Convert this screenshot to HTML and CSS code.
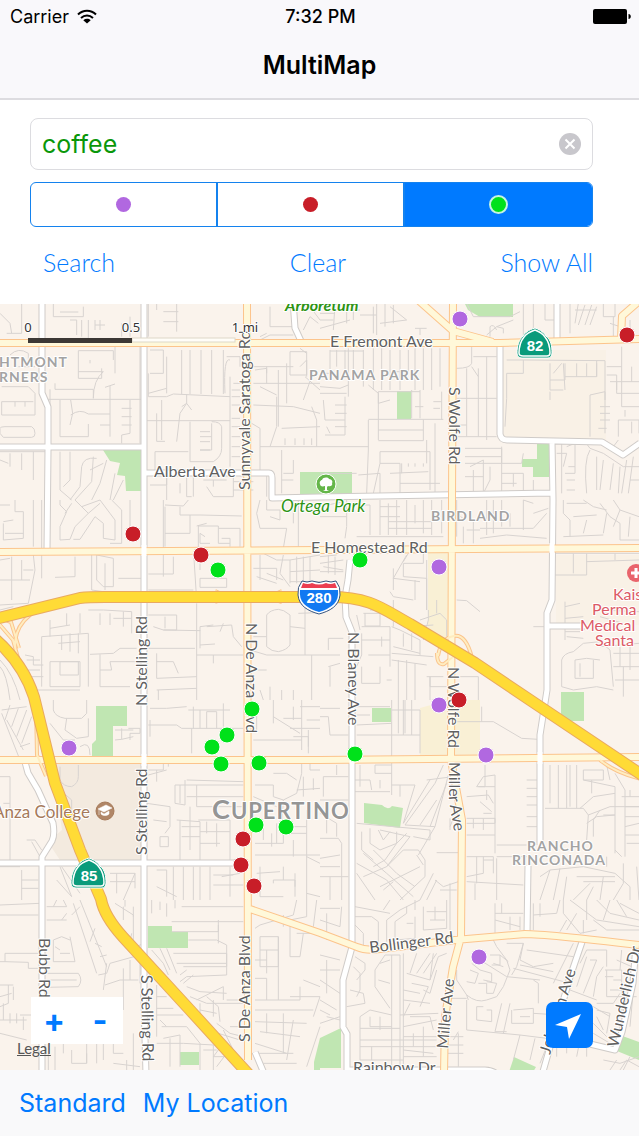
FILE: index.html
```html
<!DOCTYPE html>
<html lang="en">
<head>
    <meta charset="UTF-8">
    <meta name="viewport" content="width=device-width, initial-scale=1.0">
    <title>MultiMap</title>
    <link rel="stylesheet" href="styles.css">
</head>
<body>
    <header class="nav-bar">
        <div class="status-bar">
            <div class="carrier">
                <span>Carrier</span>
                <svg width="20" height="15" viewBox="0 0 20 15" fill="none" stroke="#000" stroke-width="2">
                    <path d="M1 5.500C6 .4 14 .4 19 5.500M4 9C7.500 5.800 12.500 5.800 16 9"/>
                    <path d="M10 14.500L6.300 11.200C8.500 9.300 11.500 9.300 13.700 11.200Z" fill="#000" stroke="none"/>
                </svg>
            </div>
            <time class="clock">7:32 PM</time>
            <svg class="battery" width="38" height="15" viewBox="0 0 38 15">
                <rect width="34" height="15" rx="2" fill="#000"/>
                <path d="M35.500 5C38.500 5 38.500 10 35.500 10Z" fill="#000"/>
            </svg>
        </div>
        <h1>MultiMap</h1>
    </header>

    <form class="search-panel">
        <div class="search-field">
            <input type="text" name="query" value="coffee" aria-label="Search term">
            <button type="reset" class="clear-text" aria-label="Clear text">
                <svg width="22" height="22" viewBox="0 0 22 22">
                    <circle cx="11" cy="11" r="11" fill="#c8c7cc"/>
                    <path d="M6.500 6.500L15.500 15.500M15.500 6.500L6.500 15.500" stroke="#fff" stroke-width="2"/>
                </svg>
            </button>
        </div>
        <div class="segments">
            <label><input type="radio" name="layer" value="purple" aria-label="Purple pins"><span class="dot purple"></span></label>
            <label><input type="radio" name="layer" value="red" aria-label="Red pins"><span class="dot red"></span></label>
            <label><input type="radio" name="layer" value="green" aria-label="Green pins" checked><span class="dot green"></span></label>
        </div>
        <div class="actions">
            <button type="button">Search</button>
            <button type="button">Clear</button>
            <button type="button">Show All</button>
        </div>
    </form>

    <main class="map">
        <svg class="map-canvas" viewBox="0 304 639 766" preserveAspectRatio="xMidYMid slice">
            <defs>
                <g id="state-shield">
                    <path d="M1-15C7-13 10-10 12-7C17-3 18 3 18 10C18 13 16 15 14 15H-12C-15 15-17 13-17 10C-17 3-15-3-11-7C-9-10-6-13 1-15Z" fill="#0a9b7b"/>
                    <path d="M1-13C6-11 9-9 11-6C15-1 16 4 16 10C16 12 15 13 13 13H-11C-14 13-15 12-15 10C-15 4-14-1-10-6C-8-9-5-11 1-13Z" fill="none" stroke="#fff" stroke-width="1.500"/>
                </g>
                <!-- main roads, drawn twice: casing, then fill -->
                <path id="white-roads" d="M42 300V393L48 407V450L47 551M144 300V1000L146 1075M0 447H144M146 473H269Q272 473 272 478V498L320 497L552 493M500 343V434Q501 440 507 440L602 442L623 455L640 443M552 441L553 500L552 600L547 613V690L540 735V845M528 866L527 934M557 300V340M293 300L295 328L301 341M549 626H585M350 560L348 580L345 597L346 617L352 632V947L343 980V1027L347 1034V1075M25 762L28 773L38 790L53 823Q55 835 52 841L42 857V1075M0 863H247M582 942L570 977L542 1075M590 1044L615 1050L622 1032L633 983L636 945M347 1070H485Q495 1070 500 1078M255 1052L266 1078"/>
                <path id="yellow-roads" d="M-5 343L320 343H500L640 339M418 300L453 331L493 342M453 300L452 500L451 760L462 820L461 937L453 967L445 1017L444 1075M247 300L248 1060M-5 552L320 550L645 548M-5 760H320L645 757M250 909L320 933L357 947Q366 951 380 949L455 940L525 934Q545 934 639 945M637 303L622 316L621 339"/>
                <path id="ramps" d="M215 602Q247 590 282 602M215 591Q247 608 282 591M38 609Q21 620 17 633Q11 652 24 668M0 618L11 622L19 648M0 625L13 640L18 658M438 656Q441 638 454 636Q466 634 472 658M437 653Q437 666 444 664L458 653M36 705L37 755L46 776M600 760Q615 773 645 780"/>
                <path id="highways" d="M-5 619L80 598Q88 597 105 597H330C372 597 384 610 410 624L475 663L530 700L645 777M-6 638C16 657 28 678 34 697L55 783L80 850L101 899Q104 916 123 937L190 1010L252 1078"/>
            </defs>

            <rect y="304" width="639" height="766" fill="#faf3ec"/>
            <path d="M48 764H142V860H60L48 842L62 830L54 775Z" fill="#f3eadf"/>
            <path d="M500 350H606V440H503ZM556 555H639V625H556Z" fill="#f9f1e6"/>
            <path d="M428 553H449V640H428ZM420 708L449 700H480V758H420Z" fill="#f9f0d5"/>

            <g class="parks">
                <path d="M103 450H141V491H126L125 476L117 475L120 463L110 461ZM300 472H352V495H300ZM465 304H513V317H480L468 310ZM397 391H411V419H397ZM537 443H549V477H533V467H522V459H537ZM96 706H127V726H113V756H92V744L96 740ZM372 708H391V722H372ZM561 692H584V721H561ZM364 803L382 805Q388 811 392 806L403 808L400 828L364 823ZM148 926H172V932H188V948H148ZM180 1052H199V1065H180ZM320 1038L341 1028V1068H320ZM514 1057L536 1067L533 1072H509ZM617 1034L639 1042V1060L617 1051ZM314 1062L320 1038V1070H314Z"/>
            </g>

            <!-- local streets, one group per tile -->
            <g class="streets">
                <g transform="translate(0 300) scale(.33333)">
                    <path d="M0 40L30 70L35 100M65 10V100H20M160 10V50H250V20M180 36H235M210 60H230V105M245 60V110M265 60V115H240M285 60V90M300 60V90M285 75H315M365 70V110M390 50V110M365 90H410M445 10V110M470 10V30M530 10V95M490 35H535M490 65H535M30 165Q55 140 85 160V190M55 200H105M235 152H340V180M235 152V235H305V205M235 215H310M270 180V190M345 140V220M315 262L345 252M280 295Q280 240 310 215M165 250V268H280V295M140 298H425M5 260H85L105 280V345H5V305H100M45 305V320M75 305V320M0 400V385Q0 380 15 380H95Q105 385 105 400Q105 412 95 412H10L0 400M180 300V410H265V372M212 300L218 340L210 375M212 345Q240 325 265 342H330M330 258V410M300 375H330M390 300V400L365 405V430M365 325H395M365 350H395M365 375H395M150 268V430M420 140V430"/>
                    <path d="M450 150H490V220H450M445 220V290H500L520 282M445 280L500 265M500 170V280M545 150V282M570 150V282M603 150V282M635 150V282M670 150V282M680 170H720V200M690 180Q670 170 675 280M485 300V420M470 340V424H495M520 282L690 290M560 282V310L540 340L530 425M545 320L560 310L575 330M440 362H690M570 365V485H640Q665 470 665 445V380Q660 365 635 365M600 395H630M600 410H635M600 425H630M600 450H630M635 370V450H600M465 520V455H565M690 230V500M700 250H720M695 270H720M695 290H720M695 315H720M695 355H720M695 380H720M695 410H720M695 440H720M695 470H720M760 200H880M765 210L800 205V220M810 20V80H880M870 10L880 60M760 250H960M780 260L830 285M800 200V250M835 210V380M860 190V310M870 155H920V225H870V155M900 200L920 180V230M900 145L920 160M760 315L880 320L960 340M755 370L780 385V440M830 290V380L810 440M845 385L960 380M780 440H960M855 415V435M885 415V435M912 415V435M935 415V435M780 440V515M845 450V580M880 480V520H850M845 540H880M935 320L950 360V440M935 230L910 300M915 230L960 270M910 90L930 50L955 70M930 20L960 60M780 120L810 105H880M780 110L800 100"/>
                    <path d="M0 455H135M30 460V500M65 460V510M100 455V540M0 480L25 490M180 455V570L215 600M210 455V540L190 560M245 500L240 560L210 600M245 500Q250 470 290 475M280 470L275 545L225 600M320 480L300 550L275 600M345 520L330 600M370 540L340 600M270 510L310 490M465 520H500V555H450M500 520V600M540 550V580M580 530V590M560 530V590H575M610 540H680M620 560L640 590H700M640 540V560M700 510V590M700 545H760M700 570H760M800 520V590"/>
                </g>
                <g transform="translate(320 300) scale(.33333)">
                    <path d="M0 40H45M0 60H40M0 85L90 60M45 15L40 90M80 10V70M100 10V60M75 30H120M120 45H170M160 20V100M170 10V105M195 10V80M220 15V70M300 85V105M285 85H320M180 70L260 60M210 20L260 60M410 10H440L460 50H570L600 35M510 110V80Q520 70 530 90M500 105L530 80L550 85V100M530 80L580 60M610 10V110M640 10V110M675 10V60H720M750 10V100M775 10L765 70M795 15L775 75M815 15L795 75M830 20L810 75M765 30H830M850 10V50H885V10M880 50V110M930 60V100M870 70L900 80"/>
                    <path d="M30 150V220H0M50 150V200M75 150V230M100 150V225M130 150V260M160 145V270M185 145V270M210 150V270M240 150V270M265 150V215H220M285 145V270M310 145V270M335 145V270M360 145V260M30 153H130M0 260L60 265L85 255M85 145V290M0 280H80M10 300L15 360H75M20 380L30 400M75 290V405H15M45 315H80M45 340H80M45 380H80M145 255L175 280V420M175 275L300 275M175 275V310L210 300M275 270V355M300 270V355M285 320H310M340 305H365M340 325H360M365 275V360M145 358H370M175 390H310V358M175 422H310V390M145 360V450L140 580M0 440H145M180 455H330V570M180 455V490H240V580M210 520L325 515M245 490V520M265 490V500M285 490V500M310 490V500M180 490L160 580M115 525L180 520V580M345 370V580M320 420V490M240 550H360M0 520H110"/>
                    <path d="M410 205Q450 205 455 190V140M460 170L530 170M440 205V410M475 205V410M500 170V420M455 200L475 230M410 295L530 295M410 375H440M410 410H530M435 445H545V490H435M435 470H545M450 500L490 480V580M435 530H490M460 510V580M510 500V540L490 580M545 440V580M545 520H610V580M545 490H605L610 460M610 180V220H560V295L555 380M560 180H610L855 182V300M690 190V270H730M690 240H735V190M730 190L735 270M770 190V230M800 190V230M830 190V230M735 230H830V182M690 275V300M725 190L700 220M810 285L855 275V400M810 285V410M840 320H870M840 340H870M840 360H870M835 385H860M905 140V320H957M860 200H905M860 225H890V280H905M870 245H957M890 245V270M905 280H957M935 200V245M895 360H957V400M895 360V410M915 330V350M935 365V400"/>
                    <path d="M725 430V580M710 460H740L730 500M740 440L765 430V520M765 500H745M765 520H735M765 540H740M740 570H765M795 425L810 445L850 460L910 500L957 500M810 450Q790 480 800 580M830 470V570M850 480L840 570M880 490L870 570M900 500L895 580M920 480L905 580M940 470L925 580M930 540H957M860 425L880 440L895 420M640 540V580M580 520V560M545 550H590"/>
                </g>
                <g transform="translate(0 500) scale(.33333)">
                    <path d="M0 15H30M45 0V35L70 35V115L10 120V70M15 100L70 100M10 65L40 60M125 0V145M100 0V140M180 0V15L200 35L180 80V120L210 118L225 80L265 40L225 0M245 20L300 0M215 10L195 40M265 40L300 10M300 0L330 40L345 60V120L310 115V70L285 50L240 118H220M335 0L365 30V130H330M390 0V110M490 0V230M495 20V140M495 15L550 18L565 0M540 20V45H600L725 48M570 45V100H495M600 100V130L630 130M595 145V78H655V130L690 130M655 85H720V140M590 78L620 70M600 100L615 110M580 145L590 300M665 115H690V140M600 190V210M600 235H680V262H600V235M445 222H520V170M445 270H580M355 235H425M165 232L225 230V170M125 165V235M100 165L105 210L85 310L0 315M0 240H90M0 180L30 175M35 170V300M70 210H100M65 180V240M275 165V270L310 275M290 165V240L310 260M290 165L340 175V260H310M315 190V270M780 0L770 40L780 85H860L850 145M800 0V30H840V60L810 50M880 0V70M895 0V140M780 165V240M760 205H830V240M790 160L830 180H870V250M850 165L840 220L870 260M870 180L960 165M870 215L960 210M870 245L960 245M890 170V250M910 170V260M930 170V260M800 220L850 240M770 230L830 250"/>
                    <path d="M125 560V410L265 400V560M150 360V410M150 385L210 375M200 340V375M240 340V400M185 405V450M210 400V455M235 400V460M175 430L240 425M265 330H310L395 335V400M300 340V375M330 340V375M370 335V380M340 355H395M270 463L340 460L360 445H410M300 463V560H390M330 485H410M330 485L335 510H300M150 485H240V560H150V485M180 485V525H235V485H180M75 465L100 470V495M80 480H120M85 510H120M95 530H130M100 495H130M110 570H240M445 345H530V390H490L460 380M495 350V385M445 445L585 445M470 460V535L590 530M470 485H520L535 520M470 570L590 565M475 600V570M490 390L600 392V380L640 375M620 380L695 375M600 390V445M590 310V600M590 465L730 465M640 465V490M695 375L700 410L725 440M600 435L645 432M660 395L670 370M760 410H800M800 345V440Q815 455 835 455Q860 450 870 435V345Q850 328 835 328Q810 330 800 345M750 450L800 465H960M915 310V465M895 340L950 338M870 380L915 385M935 465V600M780 570L790 600M810 560V600M845 570V600M880 570V600M750 510H800"/>
                    <path d="M0 480Q40 520 60 600M0 500Q20 520 30 600M0 330L40 320M0 340L30 332"/>
                </g>
                <g transform="translate(320 500) scale(.33333)">
                    <path d="M0 20L70 5M80 0V80L75 115M0 50H80M150 15V105M180 0V105M205 10V105M230 0V105M260 0V105M285 15V70M310 0V100M335 0V105M365 0V100M105 15H150M180 20H240M180 50H240M205 65H335M205 85H335M110 110H370M410 0V110M430 80V130M460 60V130M440 90H480M500 0V105M520 0V100M545 0V80M570 40V80M480 85H640L680 40M410 40L435 60M640 10L610 0V90M480 115L560 105L680 115M640 40L685 25M730 0V40L750 60V110M740 10H800M760 50L830 45M790 0L820 20L860 30M730 110L850 105M840 10L870 50L900 70V120H957M880 0L900 30L957 50M900 30L880 80M930 50L925 110M800 60L790 100M860 40L850 100"/>
                    <path d="M0 170L50 165M0 190L70 180M0 215H70M25 165V220M45 170V225M10 200L70 210M220 235L260 165M220 205V270M250 230L320 235V330M220 235L300 245M265 160L250 185M250 230V190H310V150M320 180V330M210 275L220 290L280 300M135 290L200 320L270 380L340 375M130 340H180V378H135V340M150 330H180M110 345L120 390M220 300V380M285 240V300M325 330V360L310 420M300 360L360 340L380 360V410M350 300V340M410 300L440 302L480 335M640 380H685M705 225H800V160M800 185L957 180M885 160V180M705 160H957M760 160V220M735 305V420M735 320L780 310M735 355L790 350M735 395H780M740 410L790 415M840 330L957 335M840 350L910 370"/>
                    <path d="M125 400V465L110 500M125 380H210V500M125 420H210M145 465H210M185 410V440M215 380L240 390L300 420V465M250 400V440M275 400V450M220 440L300 460M25 450V415H70M0 465H60M25 500L60 490M125 500V550H180V500M30 500V560M215 460L340 470M215 480L320 495M235 480V600M260 480V600M285 490V600M200 540H215M330 530V560H380M320 530H370M330 530V600M420 530H475V600M725 480Q730 460 760 455L790 430L840 425M725 480V560L760 570M765 480V535H820V480M765 480L800 475L840 480M780 490V530M840 425L870 450L880 560M840 440L957 430M880 460H957M900 440V500M930 440V510M880 500H957M885 540H957M910 500V590M760 570L830 560L880 570"/>
                </g>
                <g transform="translate(0 700) scale(.33333)">
                    <path d="M5 40L60 180M5 30L80 20M30 15L15 60M55 25L35 80M80 30L50 110M95 50L65 130M20 60L70 150M60 140L90 130M160 0V30Q165 50 195 55H245L260 40V0M200 55L195 90L230 115L265 110V55M150 70L190 120H225M240 140Q270 120 270 165M345 90H400M345 120L365 118V85M365 118L400 110M385 85H420V100L390 100V120M450 25H500L560 20M450 60V110M445 75H530L545 85H730M575 85V160M580 20V85M600 30V85M620 35H650V85M620 35V85M565 30H690M670 10V80M445 225L500 210M470 210V245M445 210H490V180M505 170V200M525 255V310L555 315V240M540 255V310M525 255H730M590 255V320H730M560 290H730M560 240L730 245M820 0V70M905 0V150M880 20V60M850 55H905M870 85H960M900 20H960M920 60H960M925 90V160M880 110H925V140M770 45V90M760 120H905M820 50L900 100M765 255H820V290L850 300L890 280L905 220V190M820 220H860L890 240M930 190V210H960M850 300L845 370M890 270L960 265M910 230V290M940 235V270M760 290L830 320"/>
                    <path d="M0 230H30V480M30 310H10M80 420H105L125 450M95 425L120 470M180 200V240Q190 260 215 260Q235 250 235 230V195M180 270L215 300V340M180 500L215 590M185 500L240 580M170 540L215 590M0 500H60M65 510V600M65 540H115M65 565H115M330 520H405V565M330 545H405M350 520V580M405 520L370 600M440 310L510 320V380L495 400M460 360L500 365M480 410V440H505V410H480M530 360L600 365V480M570 320V450M545 380H600M545 410H600M595 360H690M600 395H690M600 430H660M620 365V400M650 370V440M690 360V480M540 360V480M520 500V600M550 500V600M580 500V600M600 500V600M630 500V600M665 530L720 520M470 510H500V590M470 560L530 590M690 500V590M640 555H730M640 525H700M765 465H960M790 370V420M815 400V440M830 370V430M850 380V430M765 430H850M880 420V470M820 540H885V590M820 540V550M850 500V540M780 500V590H850M770 520L840 515M885 520V560M920 330V600M920 470L960 490M920 580L960 590M880 380H920M870 400H920"/>
                </g>
                <g transform="translate(320 700) scale(.33333)">
                    <path d="M0 50H25L30 105H85M0 25H60M110 105H300M215 0V285M250 0V105M275 0V105M110 75L215 70M110 45H150M110 20H210M215 30H300M235 0V100M255 0V100M300 30V160M0 300H85M10 230H85M10 230V290M50 195V225M105 275H210M105 240H150L155 270M120 195V260M165 195V220H215M165 195H215M180 265V240M215 255H285L250 370M240 255V290M370 195L345 250L255 375L345 380M320 240L400 230M330 240L250 370M385 225L345 380L295 465M380 250L330 380M350 300L300 375M410 65H520L605 115L655 118M485 20V65M470 260L490 230L525 225V460M495 195V260H470M440 290L505 285L520 310M480 305L515 335M490 340H515M440 355H525V370H440M460 355V385M490 355V390M440 405H525M475 260H525M500 270V300M530 435H620M350 458H430M390 355V390M400 355L390 380"/>
                    <path d="M620 240H655M620 265H655M620 290H655M620 315H655M620 350H655M620 380H655M690 195V310M715 195V325M740 195V325M770 195V325M750 195V320M675 325H790L805 345L870 320H957M790 210H850V240H790V210M815 240V280M790 240L885 260V460M860 195L870 240M780 325L820 290L885 280M805 345L800 420M840 330L820 360V410M850 345H885M885 220L915 270V470M800 370L830 350L885 345M905 290H957M915 320H957M915 350H957M915 380L957 370M915 405H957M930 270V290M885 450L905 470M920 430H957"/>
                    <path d="M0 415H55L65 430V600M0 340L50 370V410M20 360V400M0 475L60 465M0 500H60M0 530H85M30 530V600M110 370L330 390V420L280 410M150 385V430L180 450L230 430V395M175 390L190 420L210 395M125 395V450L160 480M180 390L270 410L200 500M160 450L230 520L285 560M130 460L200 520L280 590M110 490L200 540L250 600M110 520L165 600M160 500L195 480L230 430L260 400M130 530L200 500L250 450H295L315 480V530L240 600M180 560L300 500M190 570L220 545M290 465L310 495M345 540L370 560L415 545M340 520L300 600M350 540L320 600M390 550V600M410 570H360M440 470H520V520M470 470V550M490 480H520M440 530L490 520V470M440 545L610 555M465 550V600M530 470H620M530 475V600M660 530L690 510L790 500L885 520M690 510L660 600M720 505L700 600M740 530L730 600M770 530H885M790 545H885M820 560L800 600M850 530L840 600M860 470V500M885 520L930 560V600M910 490V550L880 600M950 500L957 600M760 600L810 550"/>
                </g>
                <g transform="translate(0 900) scale(.33333)">
                    <path d="M0 45H115M0 15L120 10M15 160V185H0M15 160H115M15 185L85 187V205L115 205M140 20H200L190 0M140 60H200M200 40L185 60M170 0L160 20M220 10L290 220M240 0L320 200M215 45L240 20M285 85L270 125M285 130L305 140M300 170L320 165M160 120L185 110L210 120M160 120V185H225L210 110M180 160H210M165 140L180 150M140 220H235Q250 240 235 260L140 262M140 240H230M295 225L320 220L330 190L420 165M320 190L310 270M315 255L360 240H415M370 205V330M390 180V240M420 190V250M395 100L385 150M430 130L400 145M345 10L400 45V120M370 20V60M400 20V50M375 0V20M0 255H40M25 255V310L0 320M40 260V300M0 290L35 280M10 310V360M30 340V370M70 350V390M50 340V370M0 400L80 420M60 345H95M0 360H80M145 300V510M165 440V510M190 430V460M215 450V490H260V460M260 430V490M290 430V490M310 430V480M340 430V460H370M340 490L420 500M380 480V510M400 400V510"/>
                    <path d="M455 0V40M480 5V30M500 10V50M525 0V25M545 20H730M515 65H730M515 95H655V75M565 120H650L680 135M655 60V130M455 150L490 190L505 225M480 145L510 210M500 145L530 220M520 160H680M530 190H680M550 200H680V160M540 225L560 210M680 135V225L560 230L540 245M550 250L580 225M560 260L600 275L680 280M590 300L670 260V300M570 290L620 310H730M600 310V360M620 290L655 320L660 365M640 300V350M600 330L650 340M680 300L730 300M650 370L690 400L730 410M670 390L700 450M655 400L720 420M690 380H725M470 255V410M470 290H500M470 325H520M470 345H550M480 360L500 380M490 415L540 405V500M510 415V500M470 430H550M485 380H560L600 430M550 430L640 435V510M600 430V510M610 450H650M640 470H690M650 500L680 460M670 430L640 470M765 85L780 75L880 45L890 0M780 110V150H835V110H780M780 150V200H835V150M800 150V220M765 180H800M765 300H900L900 260M835 110V300M765 235H800V300M850 45V80M870 70V170H900L910 100M890 100H960M910 240L960 260M870 290H960L940 350M765 330H940M765 365L920 370M780 395L900 410M800 340V400M850 340V460M880 360L860 480M765 430L860 460M770 460H880M790 490H890M920 500L960 380M920 0V50L870 60M950 0L940 80"/>
                </g>
                <g transform="translate(320 900) scale(.33333)">
                    <path d="M0 60L60 80L65 20M0 25H60M20 40V120M0 165L60 180M0 210H60M0 240L60 280M20 180V280M0 300L50 330M0 330L30 345M20 350L60 360M0 370L60 350M105 50H155L175 65V130M105 75L130 100V140L200 135M105 20L210 40M190 30L210 0M200 60L240 30L300 0M200 60V125M225 65V120L285 115V50M225 65L260 40V20M285 0V30M260 70H280M310 20V90L380 85V0M320 35H380M330 60H375M390 0V90M345 20V60M105 170L135 190V210L110 240M100 200L120 220V270L110 290M90 270L130 280L135 310L80 320M165 210L195 165M165 210V260L210 325M175 240L210 250M180 190L210 180M195 165H240V600M215 165V530M250 160V530M270 220L290 160M290 220L330 160M310 220L350 160M260 220L330 240L340 160M275 250L325 260L300 320M250 300L330 310M250 270L300 280M330 240L355 170L380 160M310 270L330 280L350 210M120 350L150 330L215 345M120 350V480M150 350V380H215M120 385H240M120 420H350M120 440H350M120 480H250M155 440V480M180 350V390M270 350H330L340 390M250 380L350 360M270 310L250 350M250 410H350M250 450L340 460M250 470H350M240 345L355 340M280 400V440M310 380V470"/>
                    <path d="M410 210V240L440 285Q470 310 500 300L530 290L550 260L570 210L560 180L530 140L520 120M440 285L445 300M450 210L475 220L465 250L440 245M455 190L480 210L515 220V245L490 240M475 250L500 250V280H520L530 250L500 245M480 180L560 230L660 240M510 165H540V195H515M540 165L565 185M520 190L550 200M525 10V100M525 40H610M525 60L600 80M545 10V40M570 50V90M600 50V90M640 10V90M640 45L710 40L720 0M660 10V50M560 130H610L590 200L575 225M610 130L600 180L640 200L700 190M620 150L760 170M580 205L750 250M600 195L700 215M640 240L655 250V310M545 310L525 395H560M570 310L550 400M580 330L640 325V370H575V330M600 350H630M640 340L720 345M470 320V360L515 365V330H500M470 320H490M440 300V390L600 405L720 420M390 295H440M415 400V500M415 395L400 420M380 410H430M380 435H430M380 460H430M600 405L580 480M645 415L630 480M690 415L660 490M780 420L770 470M710 440V470M740 440V460M800 440V470"/>
                    <path d="M730 0V40L780 100L830 90M750 0L830 60L957 80M800 0V60M830 0L870 40L957 60M870 0L850 60M890 0L920 50M900 10L957 40M740 60L720 95M770 40L740 90M790 60V100M820 60L860 90L957 90M760 130L700 250M780 190L800 150L860 150V200M770 260L800 170M790 280L830 180L810 180M820 290L830 230L850 200M855 210H905V290H860V210M855 230H880M870 270H905M880 240H905M890 180L935 200M905 150L900 210M940 180V220M750 270L830 300M820 320L870 350M830 310L880 310L900 280M830 330L870 340L860 400M820 370L860 410M820 400L870 430M830 350L850 390M940 270L930 380M950 290H920M900 330H930M700 440L740 420M850 480L900 490L957 470M870 510L890 480M900 510L920 480L957 500M930 470L910 510"/>
                </g>
            </g>

            <use href="#white-roads" class="white-casing"/>
            <use href="#white-roads" class="white-road"/>
            <use href="#yellow-roads" class="yellow-casing"/>
            <use href="#ramps" class="ramp-casing"/>
            <use href="#yellow-roads" class="yellow-road"/>
            <use href="#ramps" class="ramp"/>
            <path class="white-road" d="M144 545V556M144 754V766M552 543V553M540 752V764M352 755V764"/>
            <use href="#highways" class="highway-casing"/>
            <use href="#highways" class="highway"/>

            <g class="road-names">
                <text x="330" y="347">E Fremont Ave</text>
                <text x="154" y="477">Alberta Ave</text>
                <text x="311" y="553">E Homestead Rd</text>
                <text transform="translate(250 490) rotate(-90)">Sunnyvale Saratoga Rd</text>
                <text transform="translate(449 387) rotate(90)">S Wolfe Rd</text>
                <text transform="translate(147 706) rotate(-90)">N Stelling Rd</text>
                <text transform="translate(147 855) rotate(-90)">S Stelling Rd</text>
                <text transform="translate(246 623) rotate(90)">N De Anza Blvd</text>
                <text transform="translate(348 632) rotate(90)">N Blaney Ave</text>
                <text transform="translate(448 667) rotate(90)">N Wolfe Rd</text>
                <path id="miller-bend" d="M449 762V798Q450 810 457 845" fill="none" stroke="none"/>
                <text><textPath href="#miller-bend">Miller Ave</textPath></text>
                <text transform="translate(39 938) rotate(90)">Bubb Rd</text>
                <text transform="translate(141 975) rotate(89)">S Stelling Rd</text>
                <text transform="translate(250 1042) rotate(-90)">S De Anza Blvd</text>
                <text transform="translate(370 953) rotate(-7)">Bollinger Rd</text>
                <text transform="translate(448 1049) rotate(-85)">Miller Ave</text>
                <text transform="translate(550 1055) rotate(-73)">Johnson Ave</text>
                <text transform="translate(618 1048) rotate(-77)">Wunderlich Dr</text>
                <text x="353" y="1073">Rainbow Dr</text>
            </g>
            <g class="area-names">
                <text x="-1" y="367">HTMONT</text>
                <text x="-1" y="382">RNERS</text>
                <text x="309" y="380">PANAMA PARK</text>
                <text x="431" y="521">BIRDLAND</text>
                <text x="527" y="851">RANCHO</text>
                <text x="512" y="865">RINCONADA</text>
            </g>
            <text class="city-name" x="212" y="819">C<tspan class="small-cap">UPERTINO</tspan></text>
            <g class="park-names">
                <text x="285" y="311" class="heavy">Arboretum</text>
                <text x="281" y="512">Ortega Park</text>
            </g>
            <text class="college-name" x="90" y="818" text-anchor="end">Anza College</text>
            <g class="hospital-name">
                <text x="613" y="600">Kais</text>
                <text x="592" y="615">Perma</text>
                <text x="580" y="631">Medical</text>
                <text x="595" y="646">Santa</text>
            </g>

            <!-- places -->
            <g transform="translate(326 484)">
                <circle r="10" fill="#64b649" stroke="#fff"/>
                <path d="M-1 6L-1 2C-4 3-6 2-6 0C-7-2-5-4-4-4C-3-7 2-7 3-5C6-5 7-2 6-1C7 1 5 3 2 2L1 3V6L3 7H-3Z" fill="#fff"/>
            </g>
            <g transform="translate(105 811)">
                <circle r="9" fill="#b08667" stroke="#a67a59"/>
                <path d="M-7-2L1-6L7-3L-1 1ZM-4 1L-1 3L4 0V3C2 5-2 5-4 3ZM-6-1V4" fill="#fff" stroke="#fff" stroke-width=".5"/>
            </g>
            <g transform="translate(636 573)">
                <circle r="9" fill="#e9646c"/>
                <path d="M-5 0H5M0-5V5" stroke="#fff" stroke-width="3"/>
            </g>
            <g transform="translate(534 343)" class="shield">
                <use href="#state-shield" stroke="#fff" stroke-width="1"/>
                <text x="1" y="8">82</text>
            </g>
            <g transform="translate(88 873)" class="shield">
                <use href="#state-shield" stroke="#fff" stroke-width="1"/>
                <text x="1" y="8">85</text>
            </g>
            <g transform="translate(319 597)" class="shield">
                <path d="M-17-16Q-12-14-7-16Q0-13 7-16Q12-14 17-16Q22-10 21-2C20 9 11 14 0 17C-11 14-20 9-21-2Q-22-10-17-16Z" fill="#fff" stroke="#35547f"/>
                <path d="M-16-14Q-11-12-7-14Q0-11 7-14Q11-12 16-14L18-9H-18Z" fill="#ec3e50"/>
                <path d="M-19-7H19Q20 2 15 7Q10 12 0 15Q-10 12-15 7Q-20 2-19-7Z" fill="#1179f2"/>
                <text y="6">280</text>
            </g>

            <g class="pin purple">
                <circle cx="460" cy="319" r="8"/><circle cx="439" cy="567" r="8"/><circle cx="439" cy="705" r="8"/><circle cx="486" cy="755" r="8"/><circle cx="69" cy="748" r="8"/><circle cx="479" cy="957" r="8"/>
            </g>
            <g class="pin red">
                <circle cx="627" cy="335" r="8"/><circle cx="133" cy="534" r="8"/><circle cx="201" cy="555" r="8"/><circle cx="459" cy="700" r="8"/><circle cx="243" cy="839" r="8"/><circle cx="241" cy="865" r="8"/><circle cx="254" cy="886" r="8"/>
            </g>
            <g class="pin green">
                <circle cx="360" cy="560" r="8"/><circle cx="218" cy="570" r="8"/><circle cx="252" cy="709" r="8"/><circle cx="227" cy="735" r="8"/><circle cx="212" cy="747" r="8"/><circle cx="221" cy="764" r="8"/><circle cx="259" cy="763" r="8"/><circle cx="355" cy="754" r="8"/><circle cx="256" cy="825" r="8"/><circle cx="286" cy="827" r="8"/>
            </g>

            <g class="scale">
                <rect x="132" y="338" width="103" height="4" fill="#fffdf8" stroke="#ddd8c8"/>
                <rect x="28" y="338" width="104" height="5" fill="#3c3835"/>
                <text x="28" y="332" text-anchor="middle">0</text>
                <text x="131" y="332" text-anchor="middle">0.5</text>
                <text x="245" y="332" text-anchor="middle">1 mi</text>
            </g>
        </svg>

        <div class="zoom-buttons">
            <button type="button" aria-label="Zoom in">+</button>
            <button type="button" aria-label="Zoom out">-</button>
        </div>
        <a class="legal" href="#">Legal</a>
        <button type="button" class="locate" aria-label="Locate me">
            <svg width="47" height="46" viewBox="0 0 47 46">
                <path d="M35 12L23 37L21 25L9 23Z" fill="#fff"/>
            </svg>
        </button>
    </main>

    <footer class="toolbar">
        <button type="button">Standard</button>
        <button type="button">My Location</button>
    </footer>
</body>
</html>
```
FILE: styles.css
```css
* {
    box-sizing: border-box;
}
body {
    font-family: Inter, "Liberation Sans", sans-serif;
    background: #fff;
    color: #000;
    margin: 0;
    min-height: 100vh;
    display: flex;
    flex-direction: column;
}
button {
    background: none;
    border: none;
    padding: 0;
    color: #007aff;
    font-family: inherit;
    cursor: pointer;
}
svg {
    display: block;
}

/* top bar */
.nav-bar {
    background: #f9f8fb;
    border-bottom: 2px solid #dddce0;
    height: 100px;
}
.status-bar {
    display: grid;
    grid-template-columns: 1fr auto 1fr;
    align-items: center;
    height: 32px;
    padding: 0 8px 0 10px;
    font-size: 18px;
}
.carrier {
    display: flex;
    align-items: center;
    gap: 8px;
}
.clock {
    font-weight: 500;
}
.battery {
    justify-self: end;
}
h1 {
    margin: 0;
    text-align: center;
    font-size: 25px;
    font-weight: 600;
    line-height: 66px;
}

/* search form */
.search-panel {
    padding: 18px 46px 0 30px;
    height: 204px;
}
.search-field {
    display: flex;
    align-items: center;
    height: 52px;
    border: 1px solid #dcdce0;
    border-radius: 8px;
    padding: 0 11px;
}
.search-field input {
    flex: 1;
    min-width: 0;
    border: none;
    outline: none;
    padding: 0;
    background: none;
    color: #0a970a;
    font-family: inherit;
    font-size: 25px;
}
.segments {
    display: grid;
    grid-template-columns: repeat(3, 1fr);
    height: 45px;
    margin-top: 12px;
    border: 1px solid #1482ee;
    border-radius: 6px;
    overflow: hidden;
}
.segments label {
    display: flex;
    align-items: center;
    justify-content: center;
    border-right: 2px solid #1482ee;
    cursor: pointer;
}
.segments label:last-child {
    border-right: none;
}
.segments label:has(input:checked) {
    background: #007aff;
}
.segments input {
    appearance: none;
    width: 0;
    height: 0;
    margin: 0;
}
.dot {
    width: 15px;
    height: 15px;
    border-radius: 50%;
}
.dot.purple {
    background: #b168e0;
}
.dot.red {
    background: #c81e28;
}
.dot.green {
    width: 19px;
    height: 19px;
    border: 2px solid #c5f3e0;
    background: #00e11a;
}
.actions {
    display: grid;
    grid-template-columns: 1fr auto 1fr;
    padding-left: 13px;
    margin-top: 13px;
}
.actions button {
    font-family: Lato, sans-serif;
    font-size: 25px;
    font-weight: 300;
    line-height: 44px;
}
.actions button:first-child {
    justify-self: start;
}
.actions button:last-child {
    justify-self: end;
}

/* map */
.map {
    position: relative;
    flex: 1;
    min-height: 400px;
    overflow: hidden;
    display: flex;
}
.map-canvas {
    flex: 1;
    width: 100%;
    font-family: Lato, "Open Sans", sans-serif;
}
.parks {
    fill: #c0e6b2;
}
.streets {
    fill: none;
    stroke: #d8d3d0;
    stroke-width: 3;
}
.white-casing, .white-road, .yellow-casing, .yellow-road, .ramp-casing, .ramp, .highway-casing, .highway {
    fill: none;
    stroke-linejoin: round;
}
.white-casing {
    stroke: #cfcbc8;
    stroke-width: 7;
}
.white-road {
    stroke: #fff;
    stroke-width: 5;
}
.yellow-casing {
    stroke: #fcc48c;
    stroke-width: 8;
}
.yellow-road {
    stroke: #fff8d9;
    stroke-width: 6;
}
.ramp-casing {
    stroke: #fbc48c;
    stroke-width: 4;
}
.ramp {
    stroke: #ffedc0;
    stroke-width: 2;
}
.highway-casing {
    stroke: #e9a961;
    stroke-width: 12;
}
.highway {
    stroke: #ffdb36;
    stroke-width: 10;
}
.map-canvas text {
    paint-order: stroke;
    stroke: #fff;
    stroke-width: 2px;
    stroke-linejoin: round;
}
.road-names {
    font-size: 16px;
    fill: #606060;
}
.area-names {
    font-size: 14px;
    font-weight: 700;
    letter-spacing: 1px;
    fill: #a3a3a3;
}
.city-name {
    font-size: 27px;
    font-weight: 700;
    letter-spacing: 1px;
    fill: #959595;
}
.small-cap {
    font-size: 22px;
}
.park-names {
    font-size: 17px;
    font-style: italic;
    fill: #2e9314;
}
.park-names .heavy {
    font-size: 16px;
    font-weight: 700;
}
.college-name {
    font-size: 17px;
    fill: #a5795a;
}
.hospital-name {
    font-size: 16px;
    fill: #dc5a66;
}
.map-canvas .shield text {
    font-family: "Liberation Sans", sans-serif;
    font-size: 15px;
    font-weight: 700;
    text-anchor: middle;
    fill: #fff;
    stroke: none;
}
.pin {
    stroke: #fff;
    stroke-width: 1;
}
.pin.purple {
    fill: #b168e0;
}
.pin.red {
    fill: #c81e28;
}
.pin.green {
    fill: #00e11a;
}
.scale {
    font-family: "Noto Sans", sans-serif;
    font-size: 13px;
    fill: #333;
}
.zoom-buttons {
    position: absolute;
    left: 31px;
    bottom: 26px;
    display: flex;
    background: #fff;
}
.zoom-buttons button {
    width: 46px;
    height: 47px;
    font-size: 32px;
    font-weight: 700;
    line-height: 47px;
}
.legal {
    position: absolute;
    left: 17px;
    bottom: 13px;
    color: #555;
    font-family: Lato, sans-serif;
    font-size: 15px;
    line-height: 18px;
}
.locate {
    position: absolute;
    right: 46px;
    bottom: 22px;
    background: #007aff;
    border-radius: 7px;
}

/* bottom bar */
.toolbar {
    display: flex;
    gap: 17px;
    height: 66px;
    padding: 0 19px;
    background: #f9f9fa;
}
.toolbar button {
    font-size: 25px;
}
```
